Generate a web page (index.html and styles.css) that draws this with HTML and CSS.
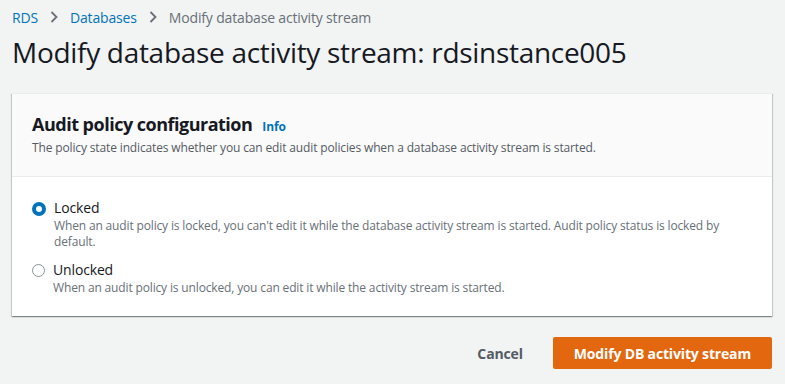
FILE: index.html
```html
<!DOCTYPE html>
<html>
<head>
<meta charset="utf-8">
<link rel="stylesheet" href="styles.css">
</head>
<body>
<div class="page">
  <nav class="crumbs">
    <a class="crumb-link">RDS</a>
    <svg class="chev" width="8" height="12" viewBox="0 0 8 12"><path d="M1.5 1 L6.5 6 L1.5 11" fill="none" stroke="#687078" stroke-width="1.8"/></svg>
    <a class="crumb-link">Databases</a>
    <svg class="chev" width="8" height="12" viewBox="0 0 8 12"><path d="M1.5 1 L6.5 6 L1.5 11" fill="none" stroke="#687078" stroke-width="1.8"/></svg>
    <span class="crumb-current">Modify database activity stream</span>
  </nav>
  <h1 class="title">Modify database activity stream: rdsinstance005</h1>
  <section class="card">
    <header class="card-head">
      <div class="card-title-row">
        <h2 class="card-title">Audit policy configuration</h2>
        <a class="info">Info</a>
      </div>
      <p class="card-desc">The policy state indicates whether you can edit audit policies when a database activity stream is started.</p>
    </header>
    <div class="card-body">
      <div class="radio-row">
        <span class="radio checked"></span>
        <div class="radio-text">
          <div class="radio-label">Locked</div>
          <div class="radio-desc">When an audit policy is locked, you can't edit it while the database activity stream is started. Audit policy status is locked by default.</div>
        </div>
      </div>
      <div class="radio-row">
        <span class="radio"></span>
        <div class="radio-text">
          <div class="radio-label">Unlocked</div>
          <div class="radio-desc">When an audit policy is unlocked, you can edit it while the activity stream is started.</div>
        </div>
      </div>
    </div>
  </section>
  <div class="actions">
    <button class="btn-link">Cancel</button>
    <button class="btn-primary">Modify DB activity stream</button>
  </div>
</div>
</body>
</html>
```
FILE: styles.css
```css
html, body {
  margin: 0;
  padding: 0;
  background: #f2f3f3;
}
body {
  font-family: "Open Sans", "Noto Sans", sans-serif;
  color: #16191f;
}
.page {
  padding: 6px 13px 0 12px;
}
.crumbs {
  display: flex;
  align-items: center;
  gap: 12px;
  height: 22px;
  font-size: 14px;
  letter-spacing: -0.16px;
}
.crumb-link {
  color: #0073bb;
}
.crumb-current {
  color: #687078;
}
.chev {
  display: block;
}
.title {
  margin: 6px 0 0;
  font-size: 28px;
  font-weight: 400;
  line-height: 36px;
  letter-spacing: -0.3px;
  color: #16191f;
}
.card {
  margin-top: 23px;
  background: #fff;
  box-shadow: 0 1px 1px 0 rgba(0,28,36,0.3), 1px 1px 1px 0 rgba(0,28,36,0.15), -1px 1px 1px 0 rgba(0,28,36,0.15);
  border-top: 1px solid #eaeded;
}
.card-head {
  background: #fafafa;
  border-bottom: 1px solid #eaeded;
  padding: 17px 20px 20px;
}
.card-title-row {
  display: flex;
  align-items: baseline;
  gap: 10px;
}
.card-title {
  margin: 0;
  font-size: 18px;
  font-weight: 700;
  line-height: 26px;
  letter-spacing: -0.5px;
}
.info {
  color: #0073bb;
  font-size: 12px;
  font-weight: 700;
  letter-spacing: -0.15px;
}
.card-desc {
  margin: 3px 0 0;
  font-size: 12px;
  line-height: 16px;
  letter-spacing: -0.14px;
  color: #545b64;
}
.card-body {
  padding: 21px 20px 20px;
  display: flex;
  flex-direction: column;
  gap: 10px;
}
.radio-row {
  display: flex;
  gap: 8px;
}
.radio {
  flex: none;
  width: 11px;
  height: 11px;
  border: 1.5px solid #879596;
  border-radius: 50%;
  margin-top: 4px;
  background: #fff;
}
.radio.checked {
  border: 4px solid #0073bb;
  width: 6px;
  height: 6px;
}
.radio-label {
  font-size: 14px;
  line-height: 20px;
  letter-spacing: -0.15px;
}
.radio-desc {
  font-size: 12px;
  line-height: 16px;
  letter-spacing: -0.15px;
  color: #687078;
}
.actions {
  display: flex;
  justify-content: flex-end;
  align-items: center;
  gap: 30px;
  margin-top: 21px;
}
.btn-link {
  background: none;
  border: none;
  font: inherit;
  font-size: 14px;
  font-weight: 700;
  letter-spacing: -0.15px;
  color: #545b64;
  padding: 0;
}
.btn-primary {
  background: #e3670f;
  border: none;
  border-radius: 2px;
  color: #fff;
  font: inherit;
  font-size: 14px;
  font-weight: 700;
  letter-spacing: -0.16px;
  padding: 0 21px;
  height: 32px;
}
```
